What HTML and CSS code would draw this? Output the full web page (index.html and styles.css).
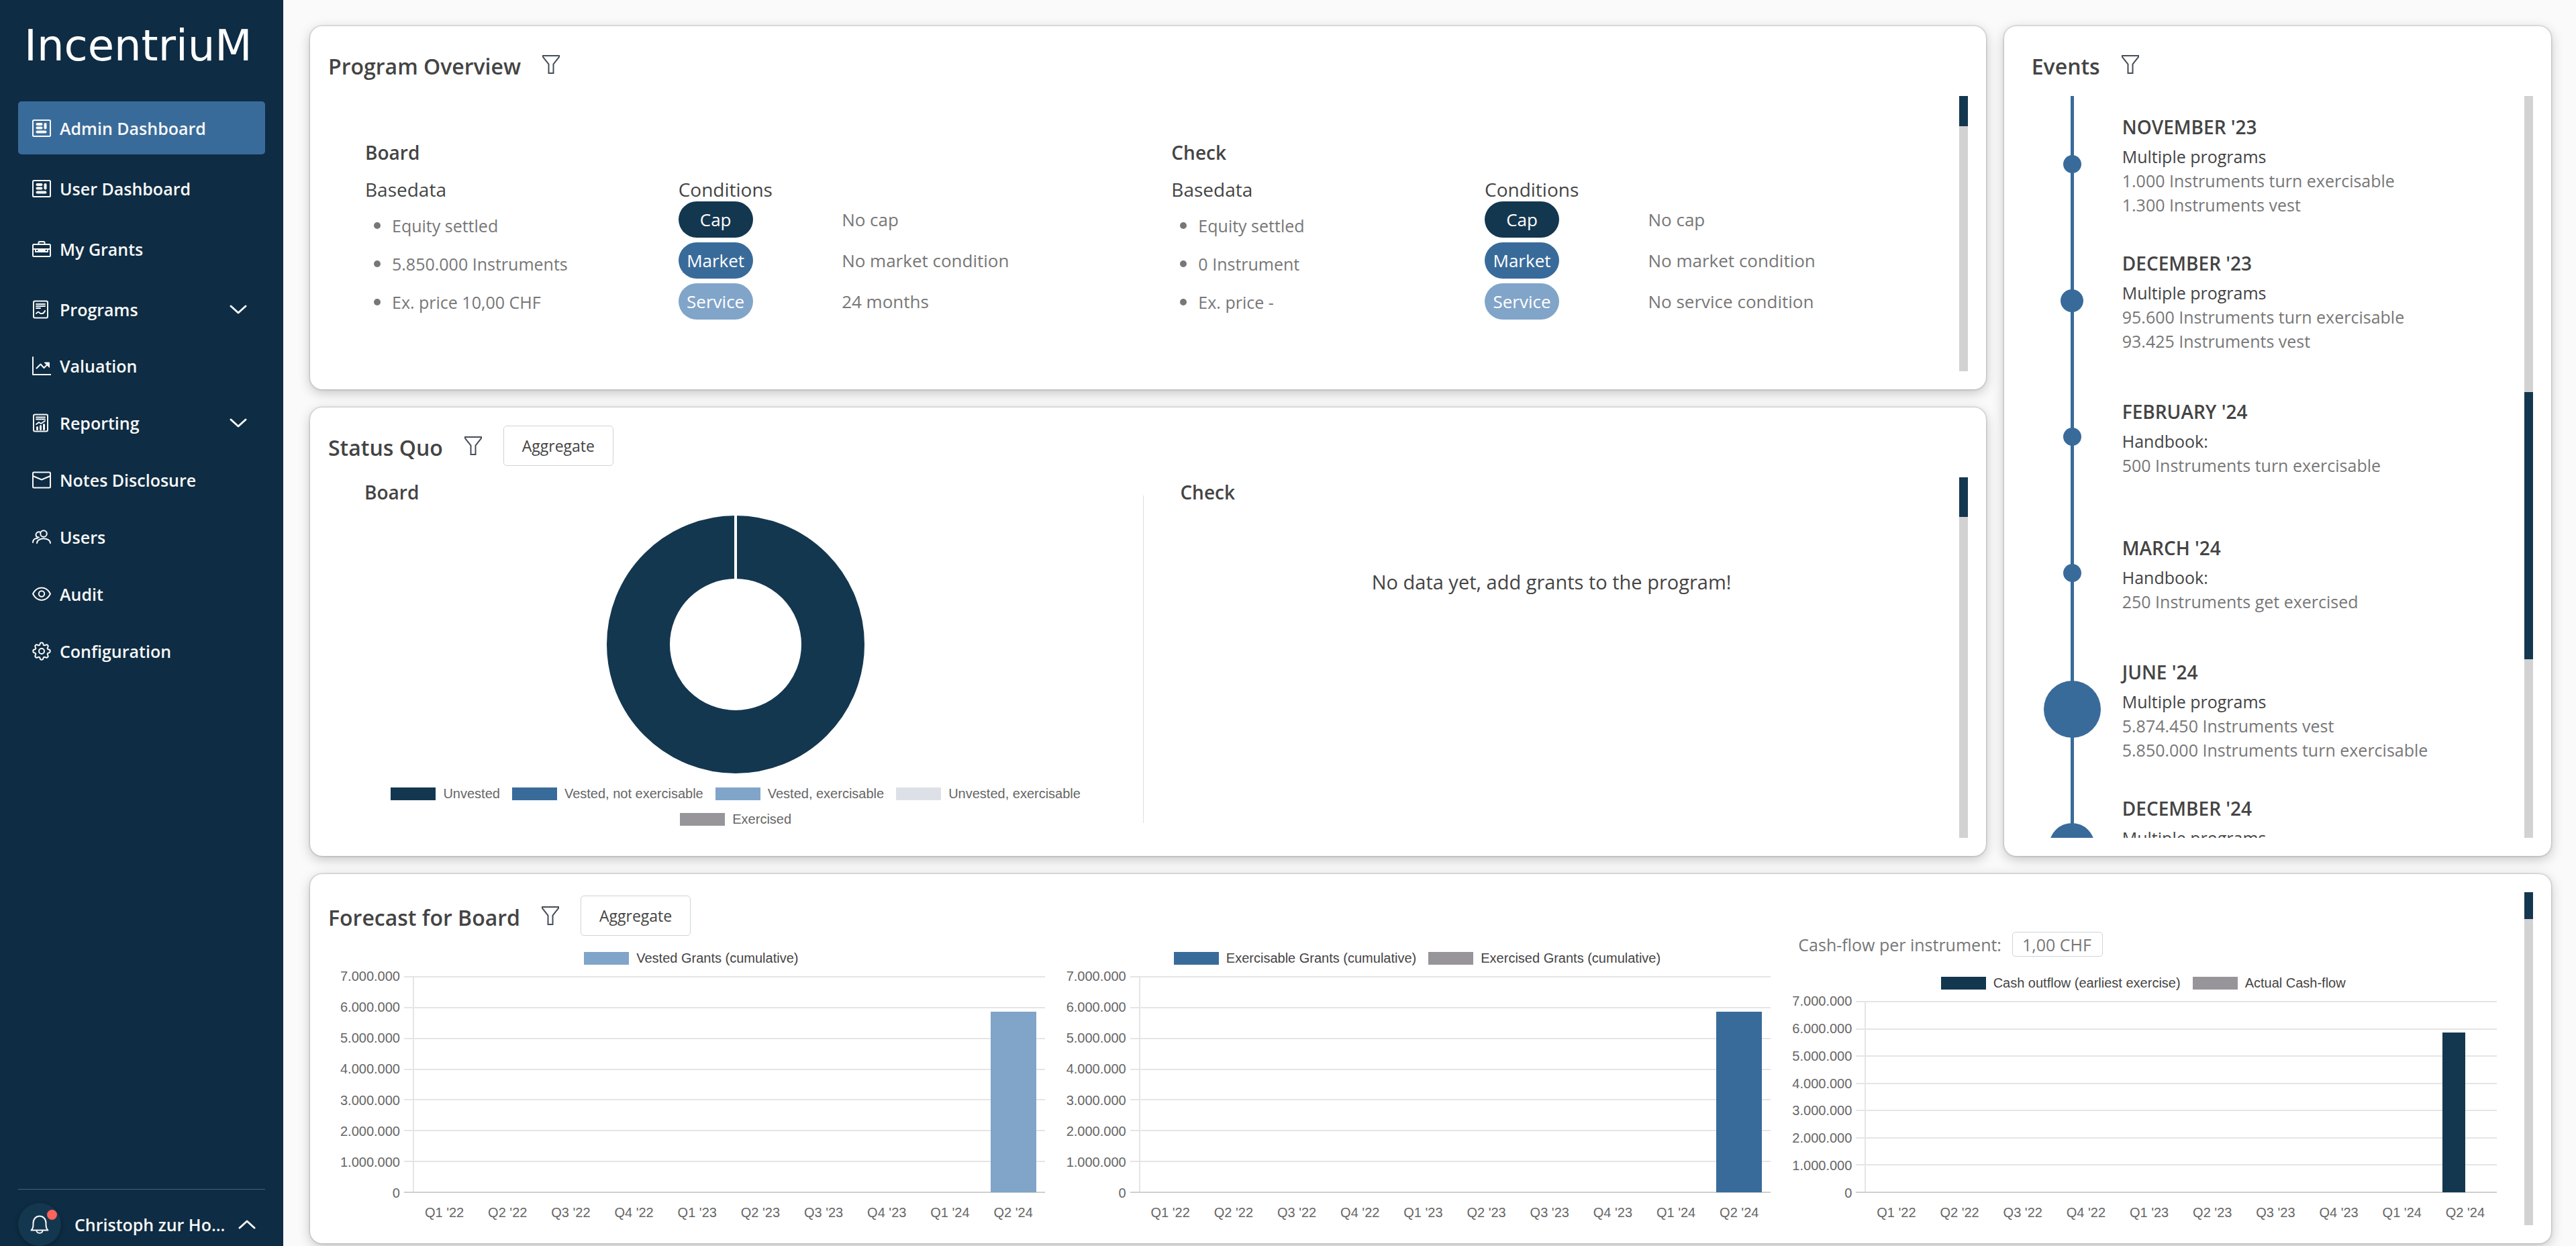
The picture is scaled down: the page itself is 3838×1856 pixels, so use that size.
FILE: index.html
```html
<!DOCTYPE html>
<html lang="en">
<head>
  <meta charset="UTF-8">
  <meta name="viewport" content="width=device-width, initial-scale=1">
  <title>IncentriuM - Admin Dashboard</title>
  <link rel="stylesheet" href="styles.css">
</head>
<body>

  <!-- shared icons -->
  <svg class="sprite" width="0" height="0" aria-hidden="true">
    <symbol id="i-dashboard" viewBox="0 0 28 28">
      <rect x="1" y="2" width="26" height="24" rx="1.5"/>
      <path d="M7.500 8h6M7.500 13.500h6M7.500 19.500h12" stroke-width="4"/>
      <path d="M19.500 8v5.500" stroke-width="4"/>
    </symbol>
    <symbol id="i-case" viewBox="0 0 28 28">
      <rect x="1" y="7" width="26" height="18" rx="1.5"/>
      <path d="M9.500 7V4.500a1.500 1.500 0 0 1 1.500-1.500h6a1.500 1.500 0 0 1 1.500 1.500V7M1 14h26M5 14v4h18v-4M9 16h10"/>
    </symbol>
    <symbol id="i-program" viewBox="0 0 28 28">
      <rect x="2" y="1.500" width="21" height="25" rx="2"/>
      <path d="M6 6h13M6 9h13M6 12h6M6 20c2-3 4-3 6 0h3c2 0 3-2 4-4"/>
    </symbol>
    <symbol id="i-chart" viewBox="0 0 28 28">
      <path d="M1 1v26h27M6.500 17.500l6-6 5 5.500 7-7"/>
      <path d="M18.500 9h7v7z" fill="currentColor" stroke-width="1"/>
    </symbol>
    <symbol id="i-report" viewBox="0 0 28 28">
      <rect x="2" y="1.500" width="21" height="25" rx="2"/>
      <path d="M6 5.500h13M6 8.500h13M6 16l4-3 3 2 6-4"/>
      <path d="M7.500 23.500v-3M12.500 23.500v-5M17.500 23.500v-7" stroke-width="3"/>
    </symbol>
    <symbol id="i-mail" viewBox="0 0 28 28">
      <rect x="1" y="2.500" width="26" height="23" rx="1.5"/>
      <path d="M1 8l13 5.500L27 8"/>
    </symbol>
    <symbol id="i-users" viewBox="0 0 28 28">
      <circle cx="17" cy="9" r="4.800"/>
      <path d="M7 23c.5-9 19.500-9 20 0M11.500 6.500C8 5.500 5.500 8 5.500 10.500s2 4 4.500 4M1 22c0-4 3-6.500 6.500-6"/>
    </symbol>
    <symbol id="i-eye" viewBox="0 0 28 28">
      <path d="M1 13.500C7 1.500 21 1.500 27 13.500 21 26 7 26 1 13.500z"/>
      <circle cx="14" cy="13.500" r="4.200"/>
    </symbol>
    <symbol id="i-gear" viewBox="0 0 28 28">
      <path d="M11.600 3.300C12 .6 16 .6 16.400 3.300c.3 2 1.700 2.600 3.400 1.500 2.300-1.500 4.900 1.100 3.400 3.400-1.100 1.700-.5 3.100 1.500 3.400 2.700.4 2.700 4.400 0 4.800-2 .3-2.600 1.700-1.500 3.400 1.500 2.300-1.100 4.900-3.400 3.400-1.700-1.100-3.100-.5-3.400 1.500-.4 2.700-4.400 2.700-4.800 0-.3-2-1.700-2.600-3.400-1.500-2.300 1.500-4.900-1.100-3.400-3.400 1.100-1.700.5-3.100-1.500-3.400-2.700-.4-2.700-4.400 0-4.800 2-.3 2.600-1.700 1.500-3.400-1.500-2.300 1.100-4.900 3.400-3.400 1.700 1.100 3.100.5 3.400-1.500z"/>
      <circle cx="14" cy="14" r="4"/>
    </symbol>
    <symbol id="i-down" viewBox="0 0 26 14">
      <path d="M2 2l11 10L24 2"/>
    </symbol>
    <symbol id="i-up" viewBox="0 0 26 14">
      <path d="M2 12L13 2l11 10"/>
    </symbol>
    <symbol id="i-bell" viewBox="0 0 28 28">
      <path d="M1.500 22.500C5 20 4.500 16 4.500 12c0-6 4-10.500 9.500-10.500s9.500 4.500 9.500 10.500c0 4-.5 8 3 10.500z"/>
      <path d="M9.500 23c.5 5 8.500 5 9 0"/>
    </symbol>
    <symbol id="i-filter" viewBox="0 0 28 30">
      <path d="M2 2h24v2l-8.500 10.500V28h-7V14.500L2 4z"/>
    </symbol>
  </svg>

  <div class="app">

    <aside class="sidebar">
      <div class="logo">IncentriuM</div>

      <nav>
        <ul class="nav-list">
          <li><a class="nav-link active" href="#"><svg class="icon"><use href="#i-dashboard"/></svg>Admin Dashboard</a></li>
          <li><a class="nav-link" href="#"><svg class="icon"><use href="#i-dashboard"/></svg>User Dashboard</a></li>
          <li><a class="nav-link" href="#"><svg class="icon"><use href="#i-case"/></svg>My Grants</a></li>
          <li><a class="nav-link" href="#"><svg class="icon"><use href="#i-program"/></svg>Programs<svg class="chevron"><use href="#i-down"/></svg></a></li>
        </ul>
        <ul class="nav-list nav-tight">
          <li><a class="nav-link" href="#"><svg class="icon"><use href="#i-chart"/></svg>Valuation</a></li>
          <li><a class="nav-link" href="#"><svg class="icon"><use href="#i-report"/></svg>Reporting<svg class="chevron"><use href="#i-down"/></svg></a></li>
          <li><a class="nav-link" href="#"><svg class="icon"><use href="#i-mail"/></svg>Notes Disclosure</a></li>
          <li><a class="nav-link" href="#"><svg class="icon"><use href="#i-users"/></svg>Users</a></li>
          <li><a class="nav-link" href="#"><svg class="icon"><use href="#i-eye"/></svg>Audit</a></li>
          <li><a class="nav-link" href="#"><svg class="icon"><use href="#i-gear"/></svg>Configuration</a></li>
        </ul>
      </nav>

      <div class="sidebar-footer">
        <button class="bell" type="button" aria-label="Notifications">
          <svg class="icon"><use href="#i-bell"/></svg>
          <span class="bell-dot"></span>
        </button>
        <button class="user" type="button">Christoph zur Ho...<svg class="chevron"><use href="#i-up"/></svg></button>
      </div>
    </aside>

    <main class="dashboard">

      <!-- Program overview -->
      <section class="card overview">
        <header class="card-header">
          <h2>Program Overview</h2>
          <button class="filter" type="button" aria-label="Filter programs"><svg><use href="#i-filter"/></svg></button>
        </header>
        <div class="card-body">
          <div class="programs">
            <article class="program">
              <h3>Board</h3>
              <div class="program-data">
                <div>
                  <h4>Basedata</h4>
                  <ul class="base-list">
                    <li>Equity settled</li>
                    <li>5.850.000 Instruments</li>
                    <li>Ex. price 10,00 CHF</li>
                  </ul>
                </div>
                <div>
                  <h4>Conditions</h4>
                  <div class="conditions">
                    <div class="condition"><span class="pill pill-cap">Cap</span><span>No cap</span></div>
                    <div class="condition"><span class="pill pill-market">Market</span><span>No market condition</span></div>
                    <div class="condition"><span class="pill pill-service">Service</span><span>24 months</span></div>
                  </div>
                </div>
              </div>
            </article>
            <article class="program">
              <h3>Check</h3>
              <div class="program-data">
                <div>
                  <h4>Basedata</h4>
                  <ul class="base-list">
                    <li>Equity settled</li>
                    <li>0 Instrument</li>
                    <li>Ex. price -</li>
                  </ul>
                </div>
                <div>
                  <h4>Conditions</h4>
                  <div class="conditions">
                    <div class="condition"><span class="pill pill-cap">Cap</span><span>No cap</span></div>
                    <div class="condition"><span class="pill pill-market">Market</span><span>No market condition</span></div>
                    <div class="condition"><span class="pill pill-service">Service</span><span>No service condition</span></div>
                  </div>
                </div>
              </div>
            </article>
          </div>
          <div class="scrollbar"><div class="thumb" style="height: 11%"></div></div>
        </div>
      </section>

      <!-- Status quo -->
      <section class="card status">
        <header class="card-header">
          <h2>Status Quo</h2>
          <button class="filter" type="button" aria-label="Filter status"><svg><use href="#i-filter"/></svg></button>
          <button class="btn" type="button">Aggregate</button>
        </header>
        <div class="card-body">
          <div class="status-cols">
            <div class="status-col">
              <h3>Board</h3>
              <svg class="donut" viewBox="0 0 384 384" role="img" aria-label="Unvested 100%">
                <circle cx="192" cy="192" r="145" fill="none" stroke="#143750" stroke-width="94"/>
                <path d="M192 0v95" stroke="#fff" stroke-width="4"/>
              </svg>
              <div class="legend">
                <span class="key"><i class="swatch navy"></i>Unvested</span>
                <span class="key"><i class="swatch blue"></i>Vested, not exercisable</span>
                <span class="key"><i class="swatch light"></i>Vested, exercisable</span>
                <span class="key"><i class="swatch pale"></i>Unvested, exercisable</span>
                <span class="key"><i class="swatch gray"></i>Exercised</span>
              </div>
            </div>
            <div class="divider"></div>
            <div class="status-col">
              <h3>Check</h3>
              <p class="empty">No data yet, add grants to the program!</p>
            </div>
          </div>
          <div class="scrollbar"><div class="thumb" style="height: 11%"></div></div>
        </div>
      </section>

      <!-- Events timeline -->
      <section class="card events">
        <header class="card-header">
          <h2>Events</h2>
          <button class="filter" type="button" aria-label="Filter events"><svg><use href="#i-filter"/></svg></button>
        </header>
        <div class="card-body">
          <ol class="timeline">
            <li class="event">
              <div class="marker"><span class="dot" style="width: 27px"></span></div>
              <div class="event-text">
                <h3>NOVEMBER '23</h3>
                <p class="event-program">Multiple programs</p>
                <p>1.000 Instruments turn exercisable</p>
                <p>1.300 Instruments vest</p>
              </div>
            </li>
            <li class="event">
              <div class="marker"><span class="dot" style="width: 34px"></span></div>
              <div class="event-text">
                <h3>DECEMBER '23</h3>
                <p class="event-program">Multiple programs</p>
                <p>95.600 Instruments turn exercisable</p>
                <p>93.425 Instruments vest</p>
              </div>
            </li>
            <li class="event">
              <div class="marker"><span class="dot" style="width: 27px"></span></div>
              <div class="event-text">
                <h3>FEBRUARY '24</h3>
                <p class="event-program">Handbook:</p>
                <p>500 Instruments turn exercisable</p>
              </div>
            </li>
            <li class="event">
              <div class="marker"><span class="dot" style="width: 27px"></span></div>
              <div class="event-text">
                <h3>MARCH '24</h3>
                <p class="event-program">Handbook:</p>
                <p>250 Instruments get exercised</p>
              </div>
            </li>
            <li class="event">
              <div class="marker"><span class="dot" style="width: 85px"></span></div>
              <div class="event-text">
                <h3>JUNE '24</h3>
                <p class="event-program">Multiple programs</p>
                <p>5.874.450 Instruments vest</p>
                <p>5.850.000 Instruments turn exercisable</p>
              </div>
            </li>
            <li class="event event-last">
              <div class="marker"><span class="dot" style="width: 68px"></span></div>
              <div class="event-text">
                <h3>DECEMBER '24</h3>
                <p class="event-program">Multiple programs</p>
              </div>
            </li>
          </ol>
          <div class="scrollbar"><div class="thumb" style="height: 36%; margin-top: 441px"></div></div>
        </div>
      </section>

      <!-- Forecast -->
      <section class="card forecast">
        <div class="forecast-main">
          <header class="card-header">
            <h2>Forecast for Board</h2>
            <button class="filter" type="button" aria-label="Filter forecast"><svg><use href="#i-filter"/></svg></button>
            <button class="btn" type="button">Aggregate</button>
          </header>
          <div class="charts">

            <div class="chart">
              <div class="legend chart-legend">
                <span class="key"><i class="swatch light"></i>Vested Grants (cumulative)</span>
              </div>
              <div class="plot">
                <div class="y-labels"><span>7.000.000</span><span>6.000.000</span><span>5.000.000</span><span>4.000.000</span><span>3.000.000</span><span>2.000.000</span><span>1.000.000</span><span>0</span></div>
                <div class="area">
                  <div class="lines"><i></i><i></i><i></i><i></i><i></i><i></i><i></i><i></i></div>
                  <div class="bars"><div class="group"><div class="bar light" style="height: 83.5%"></div></div></div>
                </div>
                <div class="x-labels"><span>Q1 '22</span><span>Q2 '22</span><span>Q3 '22</span><span>Q4 '22</span><span>Q1 '23</span><span>Q2 '23</span><span>Q3 '23</span><span>Q4 '23</span><span>Q1 '24</span><span>Q2 '24</span></div>
              </div>
            </div>

            <div class="chart">
              <div class="legend chart-legend">
                <span class="key"><i class="swatch blue"></i>Exercisable Grants (cumulative)</span>
                <span class="key"><i class="swatch gray"></i>Exercised Grants (cumulative)</span>
              </div>
              <div class="plot">
                <div class="y-labels"><span>7.000.000</span><span>6.000.000</span><span>5.000.000</span><span>4.000.000</span><span>3.000.000</span><span>2.000.000</span><span>1.000.000</span><span>0</span></div>
                <div class="area">
                  <div class="lines"><i></i><i></i><i></i><i></i><i></i><i></i><i></i><i></i></div>
                  <div class="bars"><div class="group"><div class="bar blue" style="height: 83.5%"></div></div></div>
                </div>
                <div class="x-labels"><span>Q1 '22</span><span>Q2 '22</span><span>Q3 '22</span><span>Q4 '22</span><span>Q1 '23</span><span>Q2 '23</span><span>Q3 '23</span><span>Q4 '23</span><span>Q1 '24</span><span>Q2 '24</span></div>
              </div>
            </div>

            <div class="chart">
              <div class="cashflow">
                <label for="cashflow">Cash-flow per instrument:</label>
                <input id="cashflow" type="text" value="1,00 CHF">
              </div>
              <div class="legend chart-legend">
                <span class="key"><i class="swatch navy"></i>Cash outflow (earliest exercise)</span>
                <span class="key"><i class="swatch gray"></i>Actual Cash-flow</span>
              </div>
              <div class="plot">
                <div class="y-labels"><span>7.000.000</span><span>6.000.000</span><span>5.000.000</span><span>4.000.000</span><span>3.000.000</span><span>2.000.000</span><span>1.000.000</span><span>0</span></div>
                <div class="area">
                  <div class="lines"><i></i><i></i><i></i><i></i><i></i><i></i><i></i><i></i></div>
                  <div class="bars"><div class="group"><div class="bar navy" style="height: 83.5%"></div><div class="bar" style="height: 0"></div></div></div>
                </div>
                <div class="x-labels"><span>Q1 '22</span><span>Q2 '22</span><span>Q3 '22</span><span>Q4 '22</span><span>Q1 '23</span><span>Q2 '23</span><span>Q3 '23</span><span>Q4 '23</span><span>Q1 '24</span><span>Q2 '24</span></div>
              </div>
            </div>

          </div>
        </div>
        <div class="scrollbar"><div class="thumb" style="height: 8%"></div></div>
      </section>

    </main>
  </div>

</body>
</html>
```

FILE: styles.css
```css
* { box-sizing: border-box; }

body {
  margin: 0;
  background: #fafafa;
  color: #444;
  font-family: "Open Sans", "Noto Sans", sans-serif;
  font-size: 25px;
  line-height: 36px;
}

h2, h3, h4, p, ul, ol { margin: 0; padding: 0; }
ul, ol { list-style: none; }
h2 {
  padding-top: 6px;
  font-size: 32px;
  font-weight: 600;
  line-height: 44px;
}
h3 { font-size: 28px; font-weight: 600; }
h4 { font-size: 28px; font-weight: 400; }

button, input { font-family: inherit; color: inherit; }
button { cursor: pointer; }

.sprite { position: absolute; }

.app {
  display: flex;
  height: 100vh;
}

/* sidebar */
.sidebar {
  display: flex;
  flex-direction: column;
  flex: none;
  width: 422px;
  padding: 32px 27px 0;
  background: #0e2c43;
  color: #f8f8f8;
  font-weight: 600;
}
.logo {
  height: 119px;
  padding-left: 9px;
  font-family: "DejaVu Sans", sans-serif;
  font-size: 64px;
  font-weight: 400;
  line-height: 72px;
  color: #fff;
}
.nav-list {
  display: flex;
  flex-direction: column;
  gap: 11px;
}
.nav-tight {
  margin-top: 5px;
  gap: 6px;
}
.nav-link {
  display: flex;
  align-items: center;
  height: 79px;
  padding: 0 27px 0 21px;
  border-radius: 5px;
  color: inherit;
  text-decoration: none;
}
.nav-link.active { background: #396b9a; }
.icon {
  width: 28px;
  height: 28px;
  margin-right: 13px;
  overflow: visible;
  fill: none;
  stroke: currentColor;
  stroke-width: 2;
  stroke-linecap: round;
  stroke-linejoin: round;
}
.chevron {
  width: 26px;
  height: 14px;
  margin-left: auto;
  fill: none;
  stroke: currentColor;
  stroke-width: 3;
  stroke-linecap: round;
  stroke-linejoin: round;
}
.sidebar-footer {
  display: flex;
  align-items: center;
  gap: 20px;
  margin-top: auto;
  padding-top: 20px;
  border-top: 1px solid #4c6472;
}
.bell {
  position: relative;
  flex: none;
  width: 64px;
  height: 64px;
  padding: 0;
  border: 0;
  border-radius: 50%;
  background: #143750;
  box-shadow: 0 2px 6px rgba(0, 0, 0, 0.3);
}
.bell .icon {
  display: block;
  margin: 0 auto;
}
.bell-dot {
  position: absolute;
  top: 10px;
  right: 6px;
  width: 15px;
  height: 15px;
  border-radius: 50%;
  background: #ff6259;
}
.user {
  display: flex;
  flex: 1;
  align-items: center;
  padding: 0 14px 0 0;
  border: 0;
  background: none;
  font-size: 25px;
  font-weight: 600;
  white-space: nowrap;
}

/* dashboard grid */
.dashboard {
  display: grid;
  flex: 1;
  grid-template-columns: minmax(0, 49fr) minmax(0, 16fr);
  grid-template-rows: minmax(0, 541fr) minmax(0, 668fr) minmax(0, 550fr);
  gap: 27px;
  padding: 39px 37px 4px 40px;
}
.card {
  display: flex;
  flex-direction: column;
  padding: 27px;
  border-radius: 18px;
  background: #fff;
  box-shadow: 0 0 3px rgba(0, 0, 0, 0.35), 0 5px 18px rgba(0, 0, 0, 0.22);
}
.overview { grid-area: 1 / 1; }
.status { grid-area: 2 / 1; }
.events { grid-area: 1 / 2 / 3 / 3; }
.forecast { grid-area: 3 / 1 / 4 / 3; }

.card-header {
  display: flex;
  align-items: center;
  height: 60px;
  margin-bottom: 17px;
}
.filter {
  width: 28px;
  height: 30px;
  margin: 0 31px;
  padding: 0;
  border: 0;
  background: none;
}
.filter svg {
  display: block;
  width: 28px;
  height: 30px;
  fill: none;
  stroke: #454d58;
  stroke-width: 2;
}
.btn {
  height: 60px;
  padding: 0 27px;
  border: 1px solid #ced4da;
  border-radius: 5px;
  background: #fff;
  font-size: 23px;
}
.card-body {
  display: flex;
  flex: 1;
  gap: 27px;
  min-height: 0;
}
.scrollbar {
  flex: none;
  width: 13px;
  background: #d2d2d2;
}
.thumb { background: #143750; }

/* program overview */
.programs {
  display: grid;
  flex: 1;
  grid-template-columns: 1fr 1fr;
}
.program { padding: 66px 0 0 55px; }
.program-data {
  display: grid;
  grid-template-columns: 46fr 67fr;
  margin-top: 19px;
}
.base-list {
  display: flex;
  flex-direction: column;
  gap: 21px;
  margin-top: 18px;
  color: #777;
}
.base-list li {
  display: flex;
  align-items: center;
}
.base-list li::before {
  content: "";
  width: 10px;
  height: 10px;
  margin: 0 17px 0 13px;
  border-radius: 50%;
  background: #777;
}
.conditions {
  display: flex;
  flex-direction: column;
  gap: 7px;
  color: #777;
  font-size: 26px;
}
.condition {
  display: grid;
  grid-template-columns: 24fr 43fr;
  align-items: center;
}
.pill {
  width: 111px;
  border-radius: 27px;
  color: #fff;
  line-height: 54px;
  text-align: center;
}
.pill-cap { background: #143750; }
.pill-market { background: #396b9a; }
.pill-service { background: #81a4c9; }

/* status quo */
.status .card-body { gap: 0; }
.status-cols {
  display: flex;
  flex: 1;
}
.status-col {
  display: flex;
  flex: 1;
  flex-direction: column;
  align-items: center;
}
.status-col h3 {
  align-self: flex-start;
  padding: 4px 0 0 54px;
}
.divider {
  width: 1px;
  margin: 27px 0 22px;
  background: #dedede;
}
.donut {
  width: 384px;
  margin: 17px 0 20px;
}
.empty {
  padding-top: 98px;
  font-size: 29px;
}
.legend {
  display: flex;
  flex-wrap: wrap;
  justify-content: center;
  gap: 18px;
  max-width: 1100px;
  color: #666;
  font-family: "Liberation Sans", Arial, sans-serif;
  font-size: 20px;
  line-height: 20px;
}
.key {
  display: flex;
  align-items: center;
  gap: 11px;
}
.swatch {
  width: 67px;
  height: 19px;
}
.navy { background: #143750; }
.blue { background: #396b9a; }
.light { background: #81a4c9; }
.pale { background: #dde1e7; }
.gray { background: #979599; }

/* events */
.events .card-header { padding-left: 14px; }
.timeline {
  flex: 1;
  overflow: hidden;
}
.event {
  display: grid;
  grid-template-columns: 149px 1fr;
  align-items: center;
  height: 203px;
  color: #777;
}
.event-text { padding-bottom: 4px; }
.event-last .event-text { padding-bottom: 76px; }
.event h3 {
  color: #444;
  line-height: 52px;
}
.event-program { color: #444; }
.marker {
  display: flex;
  align-items: center;
  justify-content: center;
  height: 100%;
  background: linear-gradient(#396b9a, #396b9a) center / 5px 100% no-repeat;
}
.dot {
  aspect-ratio: 1;
  border-radius: 50%;
  background: #396b9a;
}

/* forecast */
.forecast {
  flex-direction: row;
  gap: 27px;
}
.forecast-main {
  display: flex;
  flex: 1;
  flex-direction: column;
}
.forecast .card-header { margin: 5px 0 0; }
.charts {
  display: grid;
  flex: 1;
  grid-template-columns: 1fr 1fr 1fr;
}
.chart {
  display: flex;
  flex-direction: column;
}
.cashflow {
  display: flex;
  align-items: center;
  gap: 16px;
  height: 37px;
  margin: -6px 0 6px 27px;
  color: #777;
}
.cashflow input {
  width: 135px;
  height: 37px;
  padding: 0 14px;
  border: 1px solid #ced4da;
  border-radius: 5px;
  font-size: 25px;
}
.chart-legend {
  max-width: none;
  margin: 23px 0 17px;
  color: #444;
}
.plot {
  display: grid;
  flex: 1;
  grid-template-columns: auto 1fr;
  grid-template-rows: 1fr auto;
  padding: 0 14px 9px 18px;
  color: #666;
  font-family: "Liberation Sans", Arial, sans-serif;
  font-size: 20px;
  line-height: 20px;
}
.y-labels {
  display: flex;
  flex-direction: column;
  justify-content: space-between;
  margin: -10px 19px -10px 0;
  text-align: right;
}
.area {
  display: grid;
  border-left: 2px solid #e5e5e5;
}
.lines {
  display: flex;
  grid-area: 1 / 1;
  flex-direction: column;
  justify-content: space-between;
  margin-left: -15px;
}
.lines i {
  height: 2px;
  background: #e5e5e5;
}
.lines i:last-child { background: #cfcfcf; }
.bars {
  display: flex;
  grid-area: 1 / 1;
  justify-content: flex-end;
}
.group {
  display: flex;
  align-items: flex-end;
  width: 10%;
  padding: 0 13px 1px;
}
.bar { flex: 1; }
.x-labels {
  display: flex;
  grid-column: 2;
  margin-top: 19px;
}
.x-labels span {
  flex: 1;
  text-align: center;
}
```
